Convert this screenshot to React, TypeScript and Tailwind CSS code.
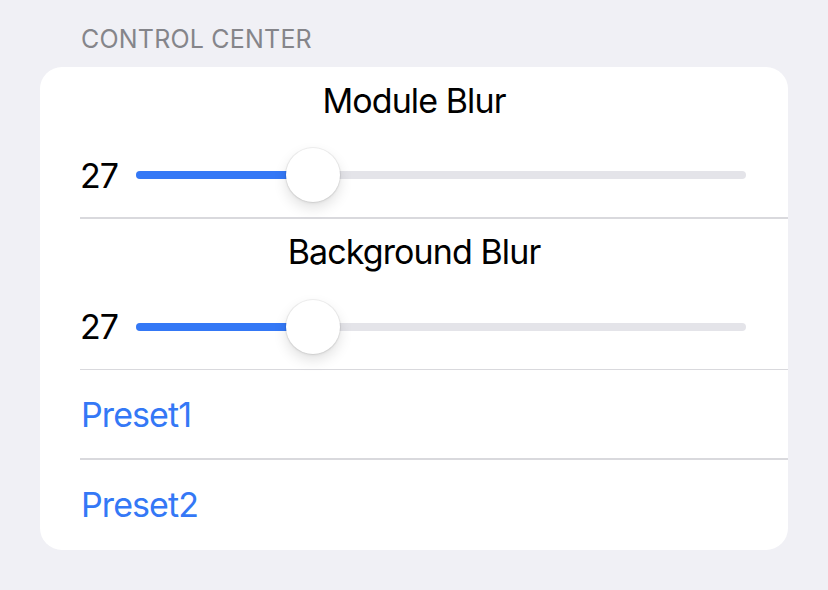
const font = { fontFamily: '"Inter", "Liberation Sans", sans-serif' };

function Slider({ value }: { value: number }) {
  return (
    <div className="flex h-[84px] items-center pl-[40px] pr-[42px]">
      <span className="w-[56px] text-[34px] tracking-[-0.9px] text-black">{value}</span>
      <div className="relative h-[8px] flex-1 rounded-full bg-[#e4e4e9]">
        <div
          className="absolute left-0 top-0 h-full rounded-full bg-[#3478f6]"
          style={{ width: `calc(27px + (100% - 54px) * ${value / 100})` }}
        />
        <div
          className="absolute top-1/2 h-[54px] w-[54px] -translate-y-1/2 rounded-full bg-white shadow-[0_6px_14px_rgba(0,0,0,0.12),0_1px_3px_rgba(0,0,0,0.08)] ring-1 ring-black/5"
          style={{ left: `calc((100% - 54px) * ${value / 100})` }}
        />
      </div>
    </div>
  );
}

function BlurSection({ title, value }: { title: string; value: number }) {
  return (
    <div>
      <div className="flex h-[66px] items-center justify-center text-[34px] tracking-[-0.9px] text-black">
        {title}
      </div>
      <Slider value={value} />
    </div>
  );
}

export default function App() {
  return (
    <div className="min-h-[590px] w-full bg-[#f0f0f5] pt-[22px]" style={font}>
      <div className="pl-[81px] text-[25px] uppercase leading-[34px] tracking-[0.2px] text-[#85858a]">Control Center</div>
      <div className="mx-[40px] mt-[11px] overflow-hidden rounded-[22px] bg-white">
        <BlurSection title="Module Blur" value={27} />
        <div className="ml-[40px] h-[1.5px] bg-[#d9d9dd]" />
        <BlurSection title="Background Blur" value={27} />
        <div className="ml-[40px] h-[1.5px] bg-[#d9d9dd]" />
        <div className="flex h-[88px] items-center pl-[41px] text-[34px] tracking-[-0.9px] text-[#3478f6]">Preset1</div>
        <div className="ml-[40px] h-[1.5px] bg-[#d9d9dd]" />
        <div className="flex h-[90px] items-center pl-[41px] text-[34px] tracking-[-0.9px] text-[#3478f6]">Preset2</div>
      </div>
    </div>
  );
}
